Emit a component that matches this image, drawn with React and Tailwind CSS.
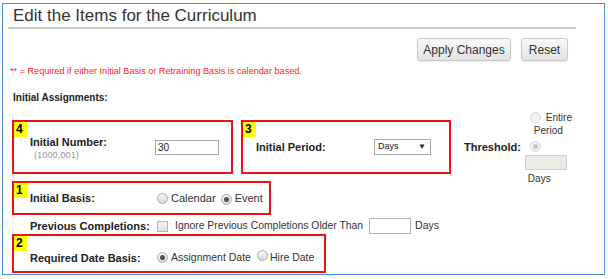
import React from 'react';

// Small radio circle, drawn to look like the old browser control
function Radio({ checked, disabled }) {
    return (
        <span
            className={`inline-flex shrink-0 items-center justify-center w-[11px] h-[11px] rounded-full border ${
                disabled ? 'border-[#d6d6d6] bg-[#f2f2f2]' : 'border-[#a9a9a9] bg-linear-to-b from-[#f6f6f6] to-[#dadada]'
            }`}
        >
            {checked && (
                <span className={`w-[5px] h-[5px] rounded-full ${disabled ? 'bg-[#c4c4c4]' : 'bg-[#4d4d4d]'}`} />
            )}
        </span>
    );
}

function Badge({ n }) {
    return (
        <span className="absolute top-0 left-0 w-[13px] h-[15px] bg-[#ffff00] text-[12px] leading-[15px] font-bold text-black pl-[2px]">
            {n}
        </span>
    );
}

function Button({ children, width }) {
    return (
        <button
            className={`${width} h-[23px] rounded-[3px] border border-[#c9c9c9] bg-linear-to-b from-[#fafafa] to-[#e3e3e3] text-[12px] text-[#333] shadow-[0_1px_1px_rgba(0,0,0,0.08)]`}
        >
            {children}
        </button>
    );
}

export default function App() {
    return (
        <div className="w-[608px] h-[279px] bg-white font-['Liberation_Sans',Arial,sans-serif] text-[#222] overflow-hidden">
            <div className="ml-[2px] mt-[3px] w-[603px] h-[272px] border border-[#4a90d9]">
                {/* header */}
                <div className="pl-[10px] pt-[2px] text-[17px] leading-[20px] text-[#333]">
                    Edit the Items for the Curriculum
                </div>
                <div className="ml-[5px] mt-[1px] w-[568px] h-[2px] bg-[#cdcdcd]" />

                <div className="flex justify-end gap-[10px] pr-[36px] mt-[9px]">
                    <Button width="w-[94px]">Apply Changes</Button>
                    <Button width="w-[47px]">Reset</Button>
                </div>

                <div className="pl-[7px] mt-[5px] text-[9.15px] leading-[11px] text-[#ff1a1a]">
                    ** = Required if either Initial Basis or Retraining Basis is calendar based.
                </div>

                <div className="pl-[10px] mt-[14px] text-[10px] leading-[14px] font-bold text-[#222]">
                    Initial Assignments:
                </div>

                <div className="pl-[9px]">
                    {/* row: initial number / period / threshold */}
                    <div className="flex items-center mt-[15px]">
                        <div className="relative flex items-center w-[221px] h-[54px] border-2 border-[#ee1111] pl-[16px]">
                            <Badge n="4" />
                            <div className="w-[125px] flex flex-col pt-[2px]">
                                <span className="text-[11px] leading-[14px] font-bold">Initial Number:</span>
                                <span className="pl-[4px] text-[9.3px] leading-[13px] text-[#999]">(1000,001)</span>
                            </div>
                            <div className="w-[64px] h-[15px] border border-[#a9a9a9] text-[10px] leading-[13px] pl-[2px]">30</div>
                        </div>

                        <div className="relative flex items-center ml-[8px] w-[210px] h-[54px] border-2 border-[#ee1111] pl-[13px]">
                            <Badge n="3" />
                            <span className="w-[118px] text-[11px] leading-[14px] font-bold">Initial Period:</span>
                            <div className="flex items-center justify-between w-[57px] h-[16px] border border-[#a9a9a9] pl-[3px] pr-[4px] text-[9px]">
                                <span>Days</span>
                                <span className="text-[8px]">▼</span>
                            </div>
                        </div>

                        <span className="ml-[13px] text-[11px] leading-[14px] font-bold">Threshold:</span>

                        <div className="flex flex-col ml-[4px] -mt-[10px] -mb-[12px] text-[10px] text-[#333]">
                            <div className="flex items-center h-[13px] pl-[5px] gap-[5px]">
                                <Radio disabled />
                                <span className="leading-[13px]">Entire</span>
                            </div>
                            <span className="pl-[9px] leading-[14px]">Period</span>
                            <div className="flex items-center h-[12px] mt-[3px] pl-[5px]">
                                <Radio checked disabled />
                            </div>
                            <div className="mt-[2px] w-[42px] h-[15px] border border-[#cfcfcf] bg-[#ebebe4]" />
                            <span className="mt-[2px] pl-[3px] leading-[14px]">Days</span>
                        </div>
                    </div>

                    {/* initial basis */}
                    <div className="relative flex items-center mt-[7px] w-[259px] h-[34px] border-2 border-[#ee1111] pl-[16px]">
                        <Badge n="1" />
                        <span className="w-[127px] text-[11px] leading-[14px] font-bold">Initial Basis:</span>
                        <div className="flex items-center text-[11px] text-[#333]">
                            <Radio />
                            <span className="ml-[3px]">Calendar</span>
                            <span className="ml-[5px]"><Radio checked /></span>
                            <span className="ml-[3px]">Event</span>
                        </div>
                    </div>

                    {/* previous completions */}
                    <div className="flex items-center h-[19px] pt-[3px] pl-[18px] text-[11px]">
                        <span className="w-[127px] leading-[14px] font-bold">Previous Completions:</span>
                        <span className="w-[11px] h-[11px] border border-[#b5b5b5] bg-linear-to-b from-[#f6f6f6] to-[#e2e2e2]" />
                        <span className="ml-[7px] text-[10.4px] text-[#333]">Ignore Previous Completions Older Than</span>
                        <span className="ml-[6px] w-[42px] h-[16px] border border-[#b5b5b5]" />
                        <span className="ml-[4px] text-[10.5px] text-[#333]">Days</span>
                    </div>

                    {/* required date basis */}
                    <div className="relative flex items-center w-[314px] h-[39px] border-2 border-[#ee1111] pl-[16px] pt-[8px]">
                        <Badge n="2" />
                        <span className="w-[127px] text-[11px] leading-[14px] font-bold">Required Date Basis:</span>
                        <div className="flex items-center text-[10.5px] text-[#333]">
                            <Radio checked />
                            <span className="ml-[3px]">Assignment Date</span>
                            <span className="ml-[6px]"><Radio /></span>
                            <span className="ml-[2px]">Hire Date</span>
                        </div>
                    </div>
                </div>
            </div>
        </div>
    );
}
